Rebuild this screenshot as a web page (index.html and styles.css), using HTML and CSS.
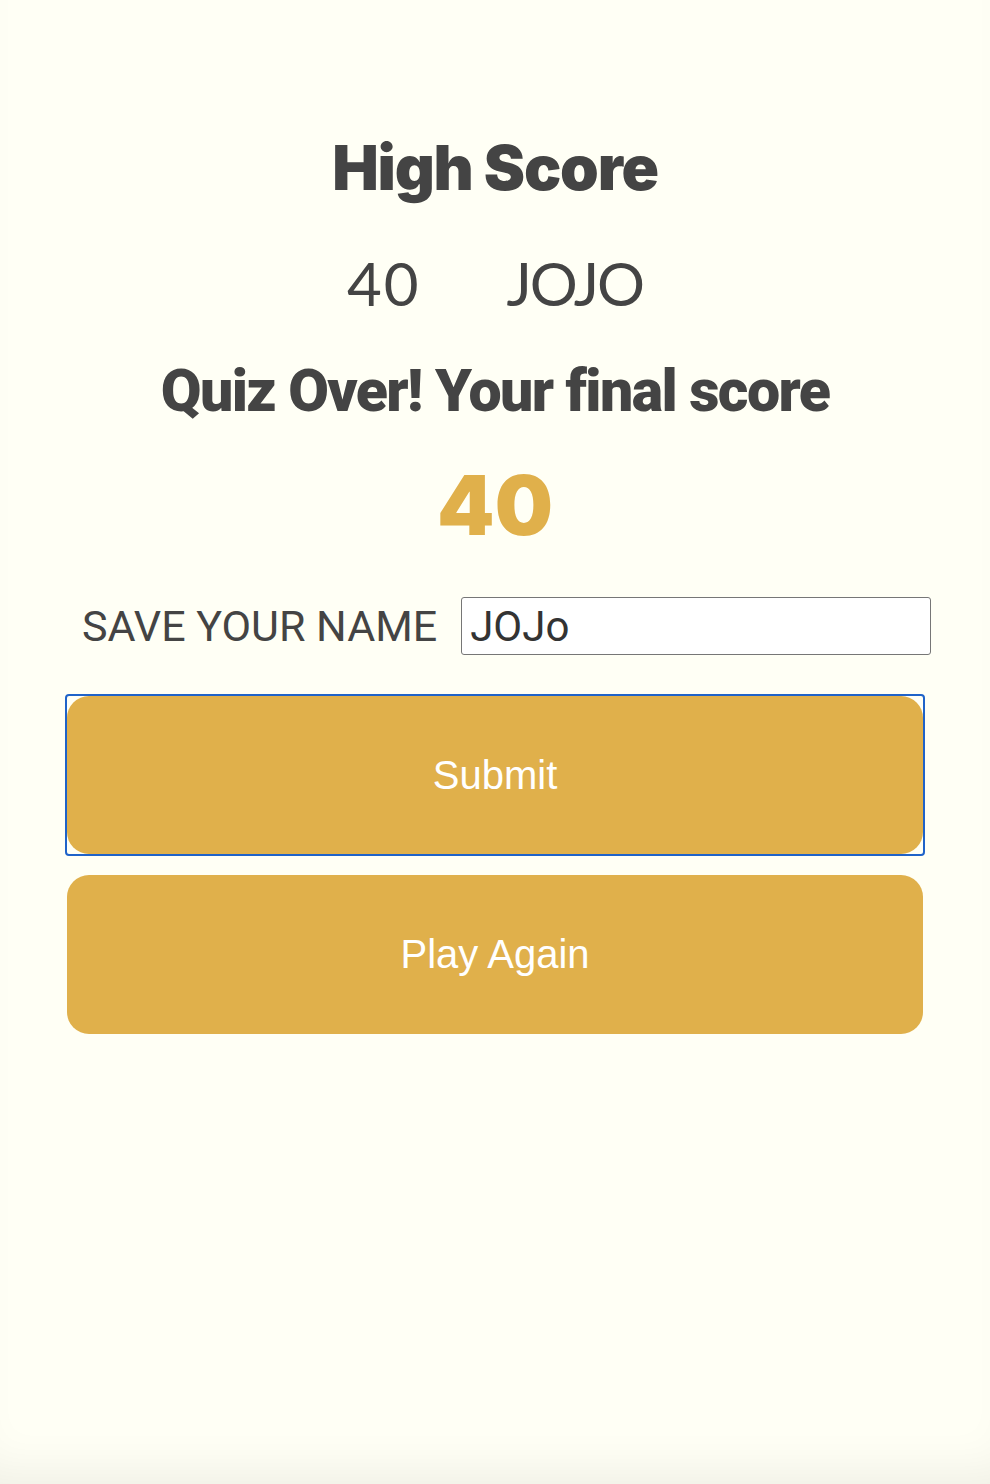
FILE: index.html
```html
<!DOCTYPE html>
<html lang="en">
<head>
<meta charset="utf-8">
<title>Quiz Over</title>
<link rel="stylesheet" href="styles.css">
</head>
<body>
<main class="page">
  <h1 class="hs-title">High Score</h1>
  <div class="hs-row"><span class="hs-score">40</span><span class="hs-name">JOJO</span></div>
  <h2 class="final-title">Quiz Over! Your final score</h2>
  <div class="final-score">40</div>
  <form class="save-form">
    <div class="name-row">
      <label class="name-label" for="name">SAVE YOUR NAME</label>
      <input class="name-input" id="name" type="text" value="JOJo">
    </div>
    <div class="focus-ring"><button type="button" class="btn btn-submit">Submit</button></div>
    <button type="button" class="btn btn-again">Play Again</button>
  </form>
</main>
</body>
</html>
```
FILE: styles.css
```css
html, body {
  margin: 0;
  padding: 0;
}
body {
  background: #fffff5;
  width: 990px;
  height: 1484px;
  box-shadow: inset 0 -40px 50px -30px rgba(0, 0, 0, 0.07);
  color: #444;
  font-family: "Noto Sans", sans-serif;
}
.page {
  display: flex;
  flex-direction: column;
  align-items: center;
  padding-top: 130px;
}
.hs-title {
  margin: 0;
  font-family: Inter, sans-serif;
  font-weight: 900;
  font-size: 62px;
  letter-spacing: -1.2px;
  line-height: 76px;
}
.hs-row {
  display: flex;
  gap: 86px;
  margin-top: 42px;
  font-family: Lato, sans-serif;
  font-size: 60px;
  line-height: 70px;
  font-weight: 400;
}
.hs-score {
  letter-spacing: 2px;
}
.hs-name {
  letter-spacing: -2px;
}
.final-title {
  margin: 40px 0 0;
  font-family: Roboto, sans-serif;
  font-weight: 900;
  font-size: 59px;
  letter-spacing: -1.6px;
  line-height: 66px;
}
.final-score {
  margin-top: 37px;
  font-family: Inter, sans-serif;
  font-weight: 900;
  font-size: 82px;
  line-height: 90px;
  color: #e0b04b;
}
.save-form {
  display: flex;
  flex-direction: column;
  width: 856px;
  margin-top: 46px;
}
.name-row {
  display: flex;
  align-items: center;
  gap: 24px;
  margin-left: 15px;
  width: 849px;
}
.name-label {
  font-family: Roboto, sans-serif;
  font-size: 43px;
  color: #444;
  white-space: nowrap;
}
.name-input {
  flex: 1;
  min-width: 0;
  width: 0;
  height: 58px;
  box-sizing: border-box;
  border: 1px solid #767676;
  border-radius: 3px;
  background: #fff;
  padding: 0 8px;
  font-family: Roboto, sans-serif;
  font-size: 42px;
  color: #333;
}
.focus-ring {
  display: flex;
  margin: 39px -2px 0;
  border: 2px solid #1f63c9;
  border-radius: 4px;
}
.btn {
  height: 158px;
  border: none;
  border-radius: 22px;
  background: #e0b04b;
  color: #fff;
  font-family: "Liberation Sans", Arial, sans-serif;
  font-size: 40px;
  cursor: pointer;
}
.btn-submit {
  flex: 1 1 auto;
}
.btn-again {
  flex: none;
  margin-top: 19px;
  height: 159px;
}
```
